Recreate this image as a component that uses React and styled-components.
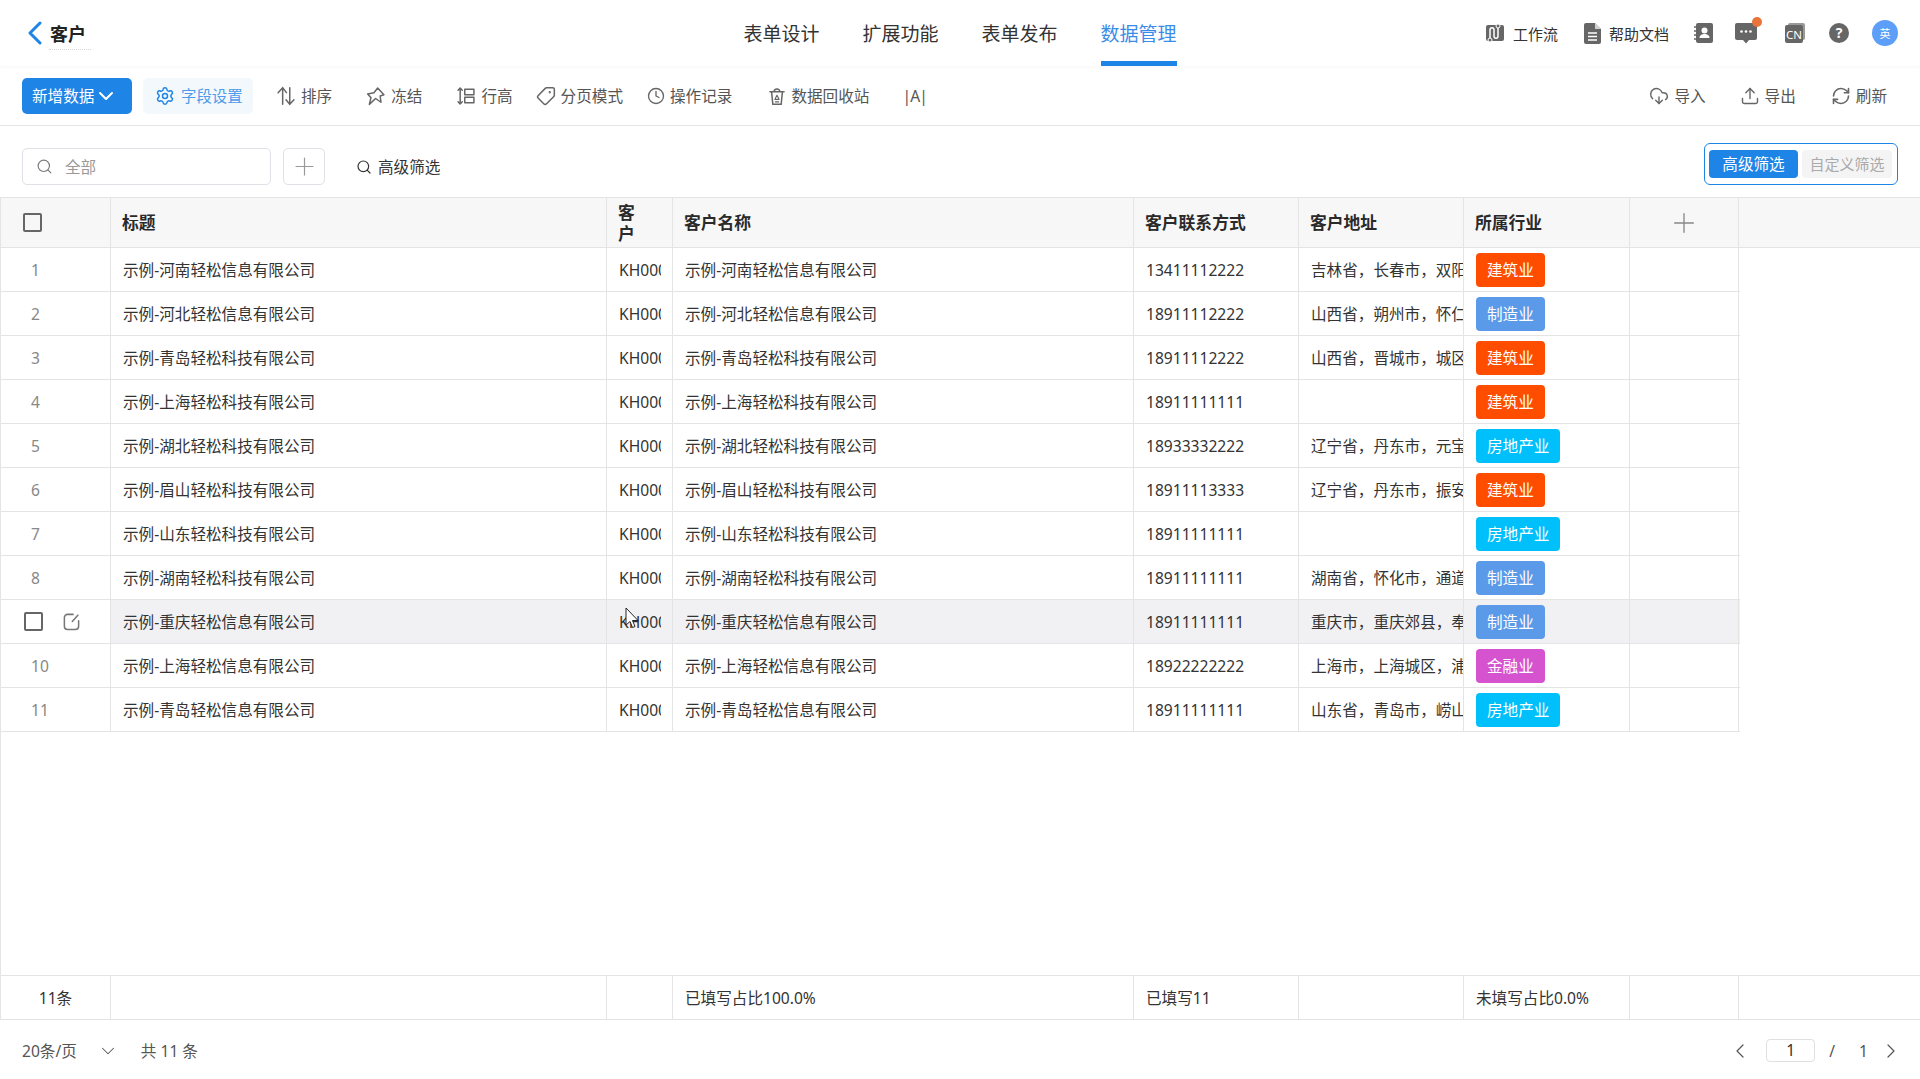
import React from "react";
import styled, { createGlobalStyle } from "styled-components";
import {
  ChevronLeft,
  ChevronRight,
  ChevronDown,
  Settings,
  Tag as TagIcon,
  Clock,
  Search,
  Plus,
  CloudDownload,
  Upload,
  RefreshCw,
} from "lucide-react";

const COLUMNS = "110px 496px 66px 461px 165px 165px 166px 109px";
const BLUE = "#1e85e6";
const LINE = "#e4e4e4";

const GlobalStyle = createGlobalStyle`
  html, body {
    margin: 0;
    padding: 0;
    background: #fff;
    font-family: "Noto Sans", "Noto Sans CJK SC", sans-serif;
    color: #333;
  }
  * { box-sizing: border-box; }
`;

const Page = styled.div`
  position: relative;
  display: flex;
  flex-direction: column;
  height: 100vh;
  overflow: hidden;
`;

const Header = styled.header`
  display: flex;
  flex: none;
  align-items: center;
  height: 66px;
  padding: 0 22px;
  box-shadow: 0 1px 4px rgba(0, 0, 0, 0.04);
`;

const Side = styled.div`
  flex: 1;
  display: flex;
  align-items: center;
  justify-content: ${(p) => (p.$right ? "flex-end" : "flex-start")};
`;

const Back = styled.svg`
  flex: none;
  margin-left: 5px;
  color: ${BLUE};
`;

const Title = styled.span`
  margin-left: 7px;
  font-size: 18px;
  font-weight: 700;
  color: #222;
  border-bottom: 1px dotted #d8d8d8;
  padding: 3px 5px 1px 1px;
  line-height: 28px;
`;

const Nav = styled.nav`
  display: flex;
  gap: 43px;
`;

const NavItem = styled.div`
  height: 66px;
  line-height: 68px;
  font-size: 19px;
  color: ${(p) => (p.$active ? "#3b8ce8" : "#333")};
  border-bottom: 5px solid ${(p) => (p.$active ? BLUE : "transparent")};
`;

const HeadLink = styled.div`
  display: flex;
  align-items: center;
  gap: 8px;
  margin-left: ${(p) => p.$gap || 0}px;
  font-size: 15px;
  color: #333;
`;

const HeadIcon = styled.div`
  position: relative;
  display: flex;
  margin-left: ${(p) => p.$gap || 0}px;
`;

const Dot = styled.span`
  position: absolute;
  top: -6px;
  right: -5px;
  width: 10px;
  height: 10px;
  border-radius: 50%;
  background: #e8743b;
`;

const Avatar = styled.div`
  width: 26px;
  height: 26px;
  margin-left: 23px;
  border-radius: 50%;
  background: #5c9ef8;
  color: #fff;
  font-size: 11px;
  display: flex;
  align-items: center;
  justify-content: center;
`;

const Toolbar = styled.div`
  display: flex;
  flex: none;
  align-items: center;
  height: 60px;
  padding: 12px 33px 12px 22px;
  border-bottom: 1px solid ${LINE};
`;

const PrimaryButton = styled.button`
  display: flex;
  align-items: center;
  width: 110px;
  height: 36px;
  padding: 0 0 0 10px;
  border: none;
  border-radius: 5px;
  background: ${BLUE};
  color: #fff;
  font: inherit;
  font-size: 15.6px;
`;

const ToolItem = styled.div`
  display: flex;
  align-items: center;
  gap: ${(p) => p.$iconGap || 5}px;
  margin-left: ${(p) => p.$gap || 0}px;
  font-size: 15.6px;
  color: #555;
  svg {
    flex: none;
    color: #666;
  }
`;

const CaseMark = styled(ToolItem)`
  letter-spacing: -0.8px;
`;

const FieldButton = styled(ToolItem)`
  height: 36px;
  width: 110px;
  padding-left: 12px;
  gap: 6px;
  border-radius: 5px;
  background: #f3f8fd;
  color: #4d9bea;
  font-size: 15.4px;
  svg {
    color: ${BLUE};
  }
`;

const Grow = styled.div`
  flex: 1;
`;

const FilterBar = styled.div`
  display: flex;
  flex: none;
  align-items: flex-start;
  height: 71px;
  padding: 22px 22px 0;
`;

const SearchBox = styled.div`
  display: flex;
  align-items: center;
  gap: 12px;
  width: 249px;
  height: 37px;
  padding-left: 13px;
  border: 1px solid #dfe1e6;
  border-radius: 5px;
  color: #999;
  font-size: 15.6px;
`;

const AddButton = styled.div`
  display: flex;
  align-items: center;
  justify-content: center;
  width: 42px;
  height: 37px;
  margin-left: 12px;
  border: 1px solid #dfe1e6;
  border-radius: 5px;
  color: #999;
`;

const AdvancedLink = styled.div`
  display: flex;
  align-items: center;
  gap: 6px;
  height: 37px;
  margin-left: 31px;
  font-size: 15.6px;
  color: #333;
`;

const ToggleGroup = styled.div`
  display: flex;
  gap: 4px;
  align-items: center;
  width: 194px;
  height: 42px;
  margin-top: -5px;
  padding: 0 4px;
  border: 1.5px solid ${BLUE};
  border-radius: 6px;
`;

const ToggleItem = styled.div`
  flex: none;
  width: ${(p) => (p.$active ? 89 : 90)}px;
  height: 28px;
  line-height: 28px;
  text-align: center;
  border-radius: 4px;
  font-size: ${(p) => (p.$active ? 15.6 : 15)}px;
  white-space: nowrap;
  background: ${(p) => (p.$active ? BLUE : "#f4f4f4")};
  color: ${(p) => (p.$active ? "#fff" : "#aaa")};
`;

const TableWrap = styled.div`
  flex: 1;
  display: flex;
  flex-direction: column;
  min-height: 0;
  border-left: 1px solid ${LINE};
`;

const Row = styled.div`
  display: grid;
  grid-template-columns: ${COLUMNS};
  width: 1739px;
  flex: none;
  border-bottom: 1px solid ${LINE};
`;

const HeadRow = styled(Row)`
  width: 100%;
  height: 51px;
  border-top: 1px solid ${LINE};
  background: #f7f7f7;
`;

const BodyRow = styled(Row)`
  height: 44px;
  background: ${(p) => (p.$hover ? "#f1f1f3" : "#fff")};
`;

const Spacer = styled.div`
  flex: 1;
`;

const FootRow = styled(Row)`
  width: 100%;
  height: 45px;
  border-top: 1px solid ${LINE};
`;

const HeadCell = styled.div`
  display: flex;
  align-items: center;
  justify-content: ${(p) => (p.$center ? "center" : "flex-start")};
  padding: 0 ${(p) => (p.$narrow ? 24 : 11)}px 0 ${(p) => (p.$lead ? 22 : 11)}px;
  border-right: 1px solid ${LINE};
  font-size: 16.8px;
  font-weight: 700;
  line-height: 21px;
  color: #2a2a2a;
`;

const Cell = styled.div`
  display: flex;
  align-items: center;
  min-width: 0;
  padding: 0 ${(p) => (p.$clip ? 0 : 11)}px 0 12px;
  overflow: hidden;
  white-space: nowrap;
  border-right: 1px solid ${LINE};
  font-size: 15.6px;
  color: #333;
`;

const IndexCell = styled(Cell)`
  padding-left: 30px;
  color: #888;
  background: #fff;
`;

const ActionCell = styled(IndexCell)`
  padding-left: 23px;
  gap: 19px;
  color: #777;
`;

const FootCount = styled(Cell)`
  justify-content: center;
  padding: 0;
`;

const CellText = styled.span`
  display: block;
  overflow: hidden;
  width: 100%;
`;

const Check = styled.span`
  display: block;
  flex: none;
  width: 19px;
  height: 19px;
  border: 2px solid #666;
  border-radius: 2px;
`;

const Tag = styled.span`
  padding: 0 11px;
  height: 34px;
  line-height: 34px;
  border-radius: 4px;
  font-size: 15.6px;
  color: #fff;
  background: ${(p) => p.$color};
`;

const Pager = styled.div`
  display: flex;
  flex: none;
  align-items: center;
  height: 59px;
  padding: 2px 17px 0 22px;
  font-size: 15.6px;
  color: #555;
`;

const PageInput = styled.div`
  width: 49px;
  height: 23px;
  margin: 0 14px;
  line-height: 21px;
  text-align: center;
  color: #333;
  border: 1px solid #e0e0e0;
  border-radius: 4px;
`;

const PagerGap = styled.span`
  margin: ${(p) => p.$m};
  display: flex;
  color: #555;
`;

const CursorMark = styled.svg`
  position: absolute;
  left: 625px;
  top: 607px;
  pointer-events: none;
`;

const Ic = ({ size = 20, children }) => (
  <svg width={size} height={size} viewBox="0 0 24 24" fill="none" stroke="currentColor" strokeWidth="1.8" strokeLinecap="round" strokeLinejoin="round">
    {children}
  </svg>
);

const SortIcon = () => (
  <Ic>
    <path d="M8 22V2M8 2L2.500 8M8 2l4.500 6" />
    <path d="M16.500 2v20M16.500 22l-4.500-5.500M16.500 22l5-5.500" />
  </Ic>
);

const PinIcon = () => (
  <Ic>
    <path d="M14 2.500l7.500 8-4.500 1.500 1 7.500-6.500-4.500L4 22l2-8-4-4.500 7.500-1.500z" />
  </Ic>
);

const HeightIcon = () => (
  <Ic>
    <path d="M5 3v18M2.500 5L5 2.500 7.500 5M2.500 19L5 21.500 7.500 19" />
    <rect x="10.500" y="4" width="11" height="6.500" />
    <rect x="10.500" y="13.500" width="11" height="6.500" />
  </Ic>
);

const TrashIcon = () => (
  <Ic>
    <path d="M3.500 7h17M8.500 7a3.500 3.500 0 0 1 7 0M5.500 7l1.500 15h10l1.500-15" />
    <path d="M12 11l-2.500 5h5zM10 19h4" strokeWidth="1.300" />
  </Ic>
);

const EditIcon = () => (
  <svg width="19" height="19" viewBox="0 0 24 24" fill="none" stroke="currentColor" strokeWidth="1.900" strokeLinecap="round">
    <path d="M14 3H7a4 4 0 0 0-4 4v11a4 4 0 0 0 4 4h10a4 4 0 0 0 4-4v-7" />
    <path d="M20 4l-7 8" />
  </svg>
);

const FlowIcon = () => (
  <svg width="20" height="20" viewBox="0 0 20 20">
    <rect x="1" y="2" width="18" height="16" rx="2" fill="#666" />
    <path d="M5 17V7c0-3 4-3 4 0v6c0 3 4 3 4 0V4" fill="none" stroke="#fff" strokeWidth="1.500" />
    <circle cx="13" cy="3" r="2" fill="#666" stroke="#fff" strokeWidth="1" />
    <circle cx="5" cy="17" r="2" fill="#666" stroke="#fff" strokeWidth="1" />
  </svg>
);

const DocIcon = () => (
  <svg width="17" height="21" viewBox="0 0 17 21">
    <path d="M2 0h9l6 6v13a2 2 0 0 1-2 2H2a2 2 0 0 1-2-2V2a2 2 0 0 1 2-2z" fill="#666" />
    <path d="M11 0l6 6h-6z" fill="#fff" opacity="0.7" />
    <path d="M4 10h9M4 13.500h9M4 17h9" stroke="#fff" strokeWidth="1.400" />
  </svg>
);

const ContactIcon = () => (
  <svg width="19" height="20" viewBox="0 0 19 20">
    <rect x="2" y="0" width="17" height="20" rx="2" fill="#666" />
    <circle cx="10.500" cy="7.500" r="3" fill="#fff" />
    <path d="M5.500 15c0-3 2.500-4 5-4s5 1 5 4z" fill="#fff" />
    <path d="M0 4h3M0 8h3M0 12h3M0 16h3" stroke="#666" strokeWidth="1.300" />
  </svg>
);

const MessageIcon = () => (
  <svg width="22" height="21" viewBox="0 0 22 21">
    <path d="M2 0h18a2 2 0 0 1 2 2v13a2 2 0 0 1-2 2h-6l-3 3.500L8 17H2a2 2 0 0 1-2-2V2a2 2 0 0 1 2-2z" fill="#666" />
    <circle cx="6.500" cy="8.500" r="1.300" fill="#fff" />
    <circle cx="11" cy="8.500" r="1.300" fill="#fff" />
    <circle cx="15.500" cy="8.500" r="1.300" fill="#fff" />
  </svg>
);

const LangIcon = () => (
  <svg width="20" height="20" viewBox="0 0 20 20">
    <rect x="3" y="0" width="17" height="17" rx="2" fill="#999" />
    <rect x="0" y="2" width="18" height="18" rx="2" fill="#666" />
    <text x="9" y="15.500" textAnchor="middle" fontSize="11.500" fill="#fff" fontFamily="'Noto Sans', sans-serif">CN</text>
  </svg>
);

const HelpIcon = () => (
  <svg width="20" height="20" viewBox="0 0 20 20">
    <circle cx="10" cy="10" r="10" fill="#666" />
    <text x="10" y="15" textAnchor="middle" fontSize="14" fontWeight="700" fill="#fff" fontFamily="'Noto Sans', sans-serif">?</text>
  </svg>
);

const tagColors = {
  建筑业: "#ff4d00",
  制造业: "#5b9ae8",
  房地产业: "#00c0fb",
  金融业: "#d653cf",
};

const rows = [
  ["河南轻松信息", "13411112222", "吉林省，长春市，双阳区", "建筑业"],
  ["河北轻松信息", "18911112222", "山西省，朔州市，怀仁县", "制造业"],
  ["青岛轻松科技", "18911112222", "山西省，晋城市，城区", "建筑业"],
  ["上海轻松科技", "18911111111", "", "建筑业"],
  ["湖北轻松科技", "18933332222", "辽宁省，丹东市，元宝区", "房地产业"],
  ["眉山轻松科技", "18911113333", "辽宁省，丹东市，振安区", "建筑业"],
  ["山东轻松科技", "18911111111", "", "房地产业"],
  ["湖南轻松科技", "18911111111", "湖南省，怀化市，通道县", "制造业"],
  ["重庆轻松信息", "18911111111", "重庆市，重庆郊县，奉节县", "制造业"],
  ["上海轻松信息", "18922222222", "上海市，上海城区，浦东新区", "金融业"],
  ["青岛轻松信息", "18911111111", "山东省，青岛市，崂山区", "房地产业"],
];

function App() {
  return (
    <Page>
      <GlobalStyle />
      <Header>
        <Side>
          <Back width="15" height="24" viewBox="0 0 15 24" fill="none" stroke="currentColor" strokeWidth="3" strokeLinecap="round" strokeLinejoin="round">
            <path d="M13 2L3 12l10 10" />
          </Back>
          <Title>客户</Title>
        </Side>
        <Nav>
          <NavItem>表单设计</NavItem>
          <NavItem>扩展功能</NavItem>
          <NavItem>表单发布</NavItem>
          <NavItem $active>数据管理</NavItem>
        </Nav>
        <Side $right>
          <HeadLink>
            <FlowIcon />
            工作流
          </HeadLink>
          <HeadLink $gap={26}>
            <DocIcon />
            帮助文档
          </HeadLink>
          <HeadIcon $gap={25}>
            <ContactIcon />
          </HeadIcon>
          <HeadIcon $gap={22}>
            <MessageIcon />
            <Dot />
          </HeadIcon>
          <HeadIcon $gap={28}>
            <LangIcon />
          </HeadIcon>
          <HeadIcon $gap={24}>
            <HelpIcon />
          </HeadIcon>
          <Avatar>英</Avatar>
        </Side>
      </Header>

      <Toolbar>
        <PrimaryButton>
          新增数据
          <ChevronDown size={24} strokeWidth={2} />
        </PrimaryButton>
        <FieldButton $gap={11}>
          <Settings size={20} strokeWidth={1.8} />
          字段设置
        </FieldButton>
        <ToolItem $gap={23}>
          <SortIcon />
          排序
        </ToolItem>
        <ToolItem $gap={34}>
          <PinIcon />
          冻结
        </ToolItem>
        <ToolItem $gap={34}>
          <HeightIcon />
          行高
        </ToolItem>
        <ToolItem $gap={23}>
          <TagIcon size={20} strokeWidth={1.8} style={{ transform: "scaleX(-1)" }} />
          分页模式
        </ToolItem>
        <ToolItem $gap={24}>
          <Clock size={18} strokeWidth={1.8} />
          操作记录
        </ToolItem>
        <ToolItem $gap={35} $iconGap={4}>
          <TrashIcon />
          数据回收站
        </ToolItem>
        <CaseMark $gap={33}>|A|</CaseMark>
        <Grow />
        <ToolItem>
          <CloudDownload size={20} strokeWidth={1.7} />
          导入
        </ToolItem>
        <ToolItem $gap={34}>
          <Upload size={20} strokeWidth={1.7} />
          导出
        </ToolItem>
        <ToolItem $gap={35}>
          <RefreshCw size={20} strokeWidth={1.9} />
          刷新
        </ToolItem>
      </Toolbar>

      <FilterBar>
        <SearchBox>
          <Search size={17} strokeWidth={1.6} color="#777" />
          全部
        </SearchBox>
        <AddButton>
          <Plus size={29} strokeWidth={1} />
        </AddButton>
        <AdvancedLink>
          <Search size={16} strokeWidth={1.8} />
          高级筛选
        </AdvancedLink>
        <Grow />
        <ToggleGroup>
          <ToggleItem $active>高级筛选</ToggleItem>
          <ToggleItem>自定义筛选</ToggleItem>
        </ToggleGroup>
      </FilterBar>

      <TableWrap>
        <HeadRow>
          <HeadCell $lead>
            <Check />
          </HeadCell>
          <HeadCell>标题</HeadCell>
          <HeadCell $narrow>客户</HeadCell>
          <HeadCell>客户名称</HeadCell>
          <HeadCell>客户联系方式</HeadCell>
          <HeadCell>客户地址</HeadCell>
          <HeadCell>所属行业</HeadCell>
          <HeadCell $center>
            <Plus size={32} strokeWidth={1} color="#888" />
          </HeadCell>
        </HeadRow>

        {rows.map((r, i) => {
          const hover = i === 8;
          const name = `示例-${r[0]}有限公司`;
          const Lead = hover ? ActionCell : IndexCell;
          return (
            <BodyRow key={i} $hover={hover}>
              <Lead>
                {hover ? (
                  <>
                    <Check />
                    <EditIcon />
                  </>
                ) : (
                  i + 1
                )}
              </Lead>
              <Cell>{name}</Cell>
              <Cell>
                <CellText>{`KH0000${String(i + 1).padStart(2, "0")}`}</CellText>
              </Cell>
              <Cell>{name}</Cell>
              <Cell>
                <CellText>{r[1]}</CellText>
              </Cell>
              <Cell $clip>
                <CellText>{r[2]}</CellText>
              </Cell>
              <Cell>
                <Tag $color={tagColors[r[3]]}>{r[3]}</Tag>
              </Cell>
              <Cell />
            </BodyRow>
          );
        })}

        <Spacer />

        <FootRow>
          <FootCount>11条</FootCount>
          <Cell />
          <Cell />
          <Cell>已填写占比100.0%</Cell>
          <Cell>已填写11</Cell>
          <Cell />
          <Cell>未填写占比0.0%</Cell>
          <Cell />
        </FootRow>
      </TableWrap>

      <Pager>
        20条/页
        <PagerGap $m="0 22px 0 20px">
          <ChevronDown size={22} strokeWidth={1.1} />
        </PagerGap>
        共 11 条
        <Grow />
        <ChevronLeft size={24} strokeWidth={1.2} />
        <PageInput>1</PageInput>/
        <PagerGap $m="0 11px 0 24px">1</PagerGap>
        <ChevronRight size={24} strokeWidth={1.2} />
      </Pager>

      <CursorMark width="14" height="22" viewBox="0 0 14 22">
        <path d="M1 1v17l4-3.500 2.500 6 2.500-1-2.500-6H13z" fill="#fff" stroke="#222" strokeWidth="1" />
      </CursorMark>
    </Page>
  );
}

export default App;
